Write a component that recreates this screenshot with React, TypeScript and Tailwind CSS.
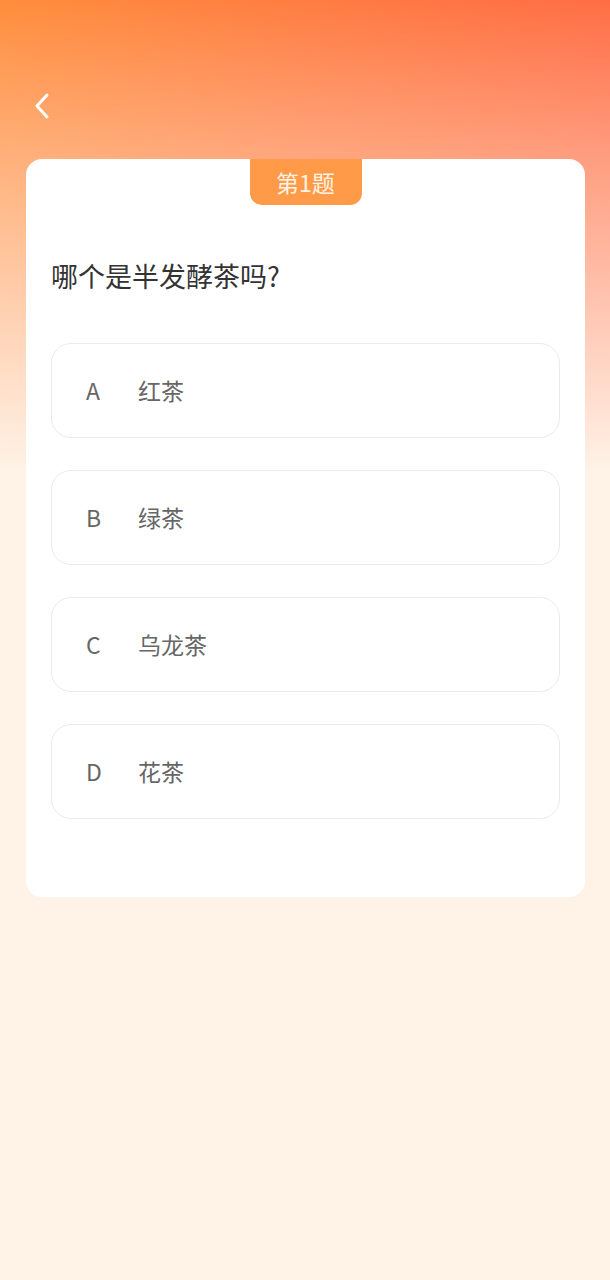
import React from "react";

const options = [
  { key: "A", label: "红茶" },
  { key: "B", label: "绿茶" },
  { key: "C", label: "乌龙茶" },
  { key: "D", label: "花茶" },
];

export default function App() {
  return (
    <div
      className="min-h-screen w-full bg-[#fff2e7] bg-[linear-gradient(180deg,rgba(255,242,231,0)_0px,rgba(255,242,231,0.35)_150px,#fff2e7_470px),linear-gradient(100deg,#ff8d3c_0%,#ff7a42_50%,#ff6945_100%)] bg-no-repeat bg-[length:100%_520px] pl-[26px] pr-[25px] pt-[86px] pb-10"
      style={{ fontFamily: '"Noto Sans CJK SC", "Noto Sans", sans-serif' }}
    >
      <button className="flex h-[40px] w-[40px] items-center justify-start pl-[7px]">
        <svg width="18" height="30" viewBox="0 0 18 30" fill="none">
          <path d="M14 4L4 15L14 26" stroke="#ffffff" strokeWidth="3" strokeLinecap="round" strokeLinejoin="round" />
        </svg>
      </button>

      <div className="mt-[33px] flex flex-col rounded-[16px] bg-white px-[25px] pb-[78px]">
        <div className="flex justify-center">
          <div className="flex h-[46px] w-[112px] items-center justify-center rounded-b-[12px] bg-[#ff9b48] text-[23px] text-[#fff3e6]">
            第1题
          </div>
        </div>

        <div className="mt-[53px] text-[27px] leading-[36px] text-[#333333]">哪个是半发酵茶吗?</div>

        <div className="mt-[49px] flex flex-col gap-[32px]">
          {options.map((o) => (
            <div
              key={o.key}
              className="flex h-[95px] items-center rounded-[20px] border border-[#ebebeb] pl-[34px] text-[23px] text-[#666666]"
            >
              <span className="w-[52px]">{o.key}</span>
              <span>{o.label}</span>
            </div>
          ))}
        </div>
      </div>
    </div>
  );
}
